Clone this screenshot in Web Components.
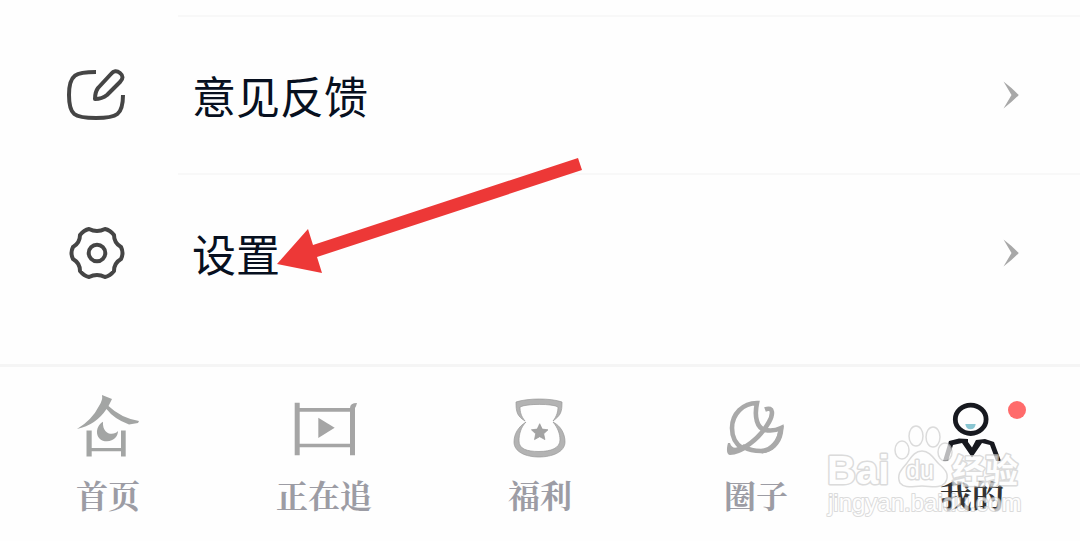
<!DOCTYPE html>
<html lang="zh-CN">
	<head>
		<meta charset="utf-8">
		<meta name="viewport" content="width=device-width, initial-scale=1">
		<title>我的</title>
		<style>
			body{margin:0; background:#fefefe; font-family:"Noto Sans CJK SC", sans-serif;}
		</style>
	</head>
	<body>
		<mine-page></mine-page>

		<template id="pageTpl">
			<style>
				:host{display:flex; flex-direction:column; min-height:100vh; position:relative; overflow:hidden;}
				main{flex:1; padding-top:15px;}
				nav{display:grid; grid-template-columns:repeat(5, 1fr); border-top:3px solid #f5f5f5; padding:27px 0 27px;}
				/* 메뉴 위에 겹치는 화살표 */
				.arrow{position:absolute; left:272px; top:152px; width:316px; height:128px; pointer-events:none;}
				.mark{position:absolute; right:50px; bottom:16px; pointer-events:none;}
			</style>
			<main>
				<menu-row>
					<svg slot="icon" width="64" height="64" viewBox="0 0 64 64" fill="none" stroke="#454545" stroke-width="4" stroke-linecap="butt" stroke-linejoin="round">
						<path d="M32 9C12 9 5 11 5 32C5 52 10 55 32 55C53 55 59 52 59 32"/>
						<path d="M34 25L47 11Q51 6 56 10Q61 14 56 19L43 32Q38 36 31 36Q31 29 34 25Z"/>
					</svg>
					意见反馈
				</menu-row>
				<menu-row>
					<svg slot="icon" width="64" height="64" viewBox="-33 -32 64 64" fill="none" stroke="#454545" stroke-width="4" stroke-linejoin="round">
						<path d="M24 -6Q27 0 24 6Q17 10 17 18Q13 23 8 24Q0 20 -8 24Q-13 23 -17 18Q-17 10 -24 6Q-27 0 -24 -6Q-17 -10 -17 -18Q-13 -23 -8 -24Q0 -20 8 -24Q13 -23 17 -18Q17 -10 24 -6Z"/>
						<circle r="8.3"/>
					</svg>
					设置
				</menu-row>
			</main>
			<nav>
				<tab-item>
					<svg slot="icon" width="64" height="68" viewBox="0 0 64 68" fill="#a3a5a4">
						<path d="M26 1L36 5L32.500 12Q45 24 63 27L62 29L53 30.500Q38 25 30.500 15Q20 31 1 35Q16 26 23 12Q27 6 26 1Z"/>
						<path d="M27 27.700C18 33 19 47 31 47.300C38 47 42 42 42 37C38 42 26 41 27 27.700Z"/>
						<path d="M10.500 36.500H15.700V54H45V36.500H49.700V62.500H45V57.300H15.700V62.500H10.500Z"/>
					</svg>
					首页
				</tab-item>
				<tab-item>
					<svg slot="icon" width="64" height="68" viewBox="0 0 64 68" fill="#a5a5a5">
						<path fill-rule="evenodd" d="M2.700 8.700H7.700V14H58Q58 9 65 9Q64 13 63 14V61.300H58V53.300H7.700V61.300H2.700ZM7.700 17.700V49.700H58V17.700Z"/>
						<path d="M26.300 23.700L42.700 33.700L26.300 44Z"/>
					</svg>
					正在追
				</tab-item>
				<tab-item>
					<svg slot="icon" width="64" height="68" viewBox="0 0 64 68" fill="#b3b3b3" stroke="#989898" stroke-width=".7">
						<path d="M17 27C9 22 8 18 8 8C20 4 43 4 54 8C54 18 53 21 45 27C49 22 50 17 50 13C45 9.500 18 9.500 12 13C12 18 13 22 17 27Z"/>
						<path d="M18 28C10 33 6 40 6 48C6 58 18 63 31 63C44 63 57 58 57 48C57 40 53 32 45 28C50 34 52 40 52 46C52 54 43 57.500 31 57.500C19 57.500 11 55 11 47C11 40 13 33 18 28Z"/>
						<path fill="#a3a3a3" d="M31.700 29.700L34.200 35.100L40 35.800L35.700 39.800L36.900 45.600L31.700 42.700L26.500 45.600L27.700 39.800L23.400 35.800L29.200 35.100Z"/>
					</svg>
					福利
				</tab-item>
				<tab-item>
					<svg slot="icon" width="64" height="68" viewBox="0 0 64 68" fill="none" stroke="#a9a9a9" stroke-width="4.600">
						<path d="M18 54C12 50 8 43 8 34C8 20 19 9 33 9C30 23 33 34 41 36C46 37 51 37 57 34C56 47 47 57 37 57C30 57 25 56 20 53"/>
						<path d="M41 15.500C50 12 49 21 45 28C40 37 32 46 21 53"/>
						<path fill="#a9a9a9" stroke="none" d="M4 49C2 56 3 61 6 61C12 61 18 58 25 54L20 50C14 54 8 56 6 49Z"/>
						<path fill="#a9a9a9" stroke="none" d="M60 31L59 39C57 51 48 59 37 59.500C46 56 53 48 54 37Z"/>
					</svg>
					圈子
				</tab-item>
				<tab-item active badge>
					<svg slot="icon" width="64" height="68" viewBox="0 0 64 68" fill="#17191f">
						<ellipse cx="30.700" cy="25.300" rx="15.400" ry="14.200" fill="none" stroke="#17191f" stroke-width="4.800"/>
						<path fill="#8ac6d2" d="M25.300 30H35.700Q35 35.300 30.500 35.300Q26 35.300 25.300 30Z"/>
						<path d="M9 47L19 44.500L28 45V48L32 53.500L36 46L45 45L54 48L61 67H56L50 51L42 49L32 63.500L22 49L13 51L8 67H3Z"/>
					</svg>
					我的
				</tab-item>
			</nav>
			<svg class="arrow" viewBox="272 152 316 128" aria-hidden="true">
				<path fill="#ed3837" d="M277 264L308 229L313 245L578 158L582 170L317 257L322 273Z"/>
			</svg>
			<water-mark class="mark"></water-mark>
		</template>

		<template id="rowTpl">
			<style>
				:host{display:block;}
				:host::before{content:""; display:block; height:2px; margin-left:178px; background:#f8f8f8;}
				button{display:flex; align-items:center; gap:64px; width:100%; height:156px; padding:0 60px 0 64px; border:0; background:none; color:#07101f; font:inherit; font-size:44px; line-height:64px; text-align:left; cursor:pointer;}
				.label{flex:1;}
				svg, ::slotted(svg){display:block; flex:none;}
			</style>
			<button type="button">
				<slot name="icon"></slot>
				<span class="label"><slot></slot></span>
				<svg width="18" height="28" viewBox="0 0 18 28" aria-hidden="true"><path fill="#a8a8a8" d="M1.500 .5Q10 7 16.800 14Q10 21 1.500 27.500Q6 20 9.500 14Q6 8 1.500 .5Z"/></svg>
			</button>
		</template>

		<template id="tabTpl">
			<style>
				:host{display:block;}
				button{position:relative; display:flex; flex-direction:column; align-items:center; gap:12px; width:100%; padding:0; border:0; background:none; color:#9c9ca4; font-family:"Noto Serif CJK SC", "Noto Sans CJK SC", serif; font-size:32px; font-weight:700; line-height:40px; cursor:pointer;}
				:host([active]) button{color:#333;}
				::slotted(svg){display:block; overflow:visible;}
				.badge{display:none; position:absolute; left:calc(50% + 36px); top:7px; width:18px; height:18px; border-radius:50%; background:#ff6b6b;}
				:host([badge]) .badge{display:block;}
			</style>
			<button type="button">
				<slot name="icon"></slot>
				<span><slot></slot></span>
				<i class="badge"></i>
			</button>
		</template>

		<template id="markTpl">
			<style>
				:host{display:block;}
				svg{display:block; opacity:.7;}
				text{font-family:"Liberation Sans", "Noto Sans CJK SC", sans-serif; paint-order:stroke;}
			</style>
			<svg width="206" height="105" viewBox="824 420 206 105" fill="#fff" stroke="#cdcdcd" stroke-width="3" stroke-linejoin="round">
				<text x="827" y="484" font-size="40" font-weight="700">Bai</text>
				<g stroke-width="1.500">
					<ellipse cx="902" cy="450" rx="7" ry="9"/>
					<ellipse cx="916" cy="436" rx="7" ry="10"/>
					<ellipse cx="933" cy="437" rx="7" ry="10"/>
					<ellipse cx="945" cy="452" rx="7" ry="9"/>
					<path d="M922 451C930 451 934 459 939 464C946 470 950 475 945 483C940 489 931 486 922 486C913 486 905 489 900 483C896 474 902 469 907 463C911 458 914 451 922 451Z"/>
				</g>
				<text x="906" y="479" font-size="25">du</text>
				<text x="952" y="483" font-size="33" font-weight="700">经验</text>
				<text x="828" y="511" font-size="24" stroke-width="2">jingyan.baidu.com</text>
			</svg>
		</template>

		<script>
			// template 을 복제해서 shadow root 에 넣는 공통 클래스
			class BaseElement extends HTMLElement{
				constructor(){
					super();
					const tpl = document.getElementById(this.constructor.tpl);
					this.attachShadow({mode : 'open'}).append(tpl.content.cloneNode(true));
				}
			}

			class MenuRow extends BaseElement{
				static tpl = 'rowTpl';
			}
			customElements.define('menu-row', MenuRow);

			class TabItem extends BaseElement{
				static tpl = 'tabTpl';
				connectedCallback(){
					if(this.hasAttribute('active')) {
						this.shadowRoot.querySelector('button').setAttribute('aria-current', 'page');
					}
				}
			}
			customElements.define('tab-item', TabItem);

			class WaterMark extends BaseElement{
				static tpl = 'markTpl';
			}
			customElements.define('water-mark', WaterMark);

			class MinePage extends BaseElement{
				static tpl = 'pageTpl';
			}
			customElements.define('mine-page', MinePage);
		</script>
	</body>
</html>
